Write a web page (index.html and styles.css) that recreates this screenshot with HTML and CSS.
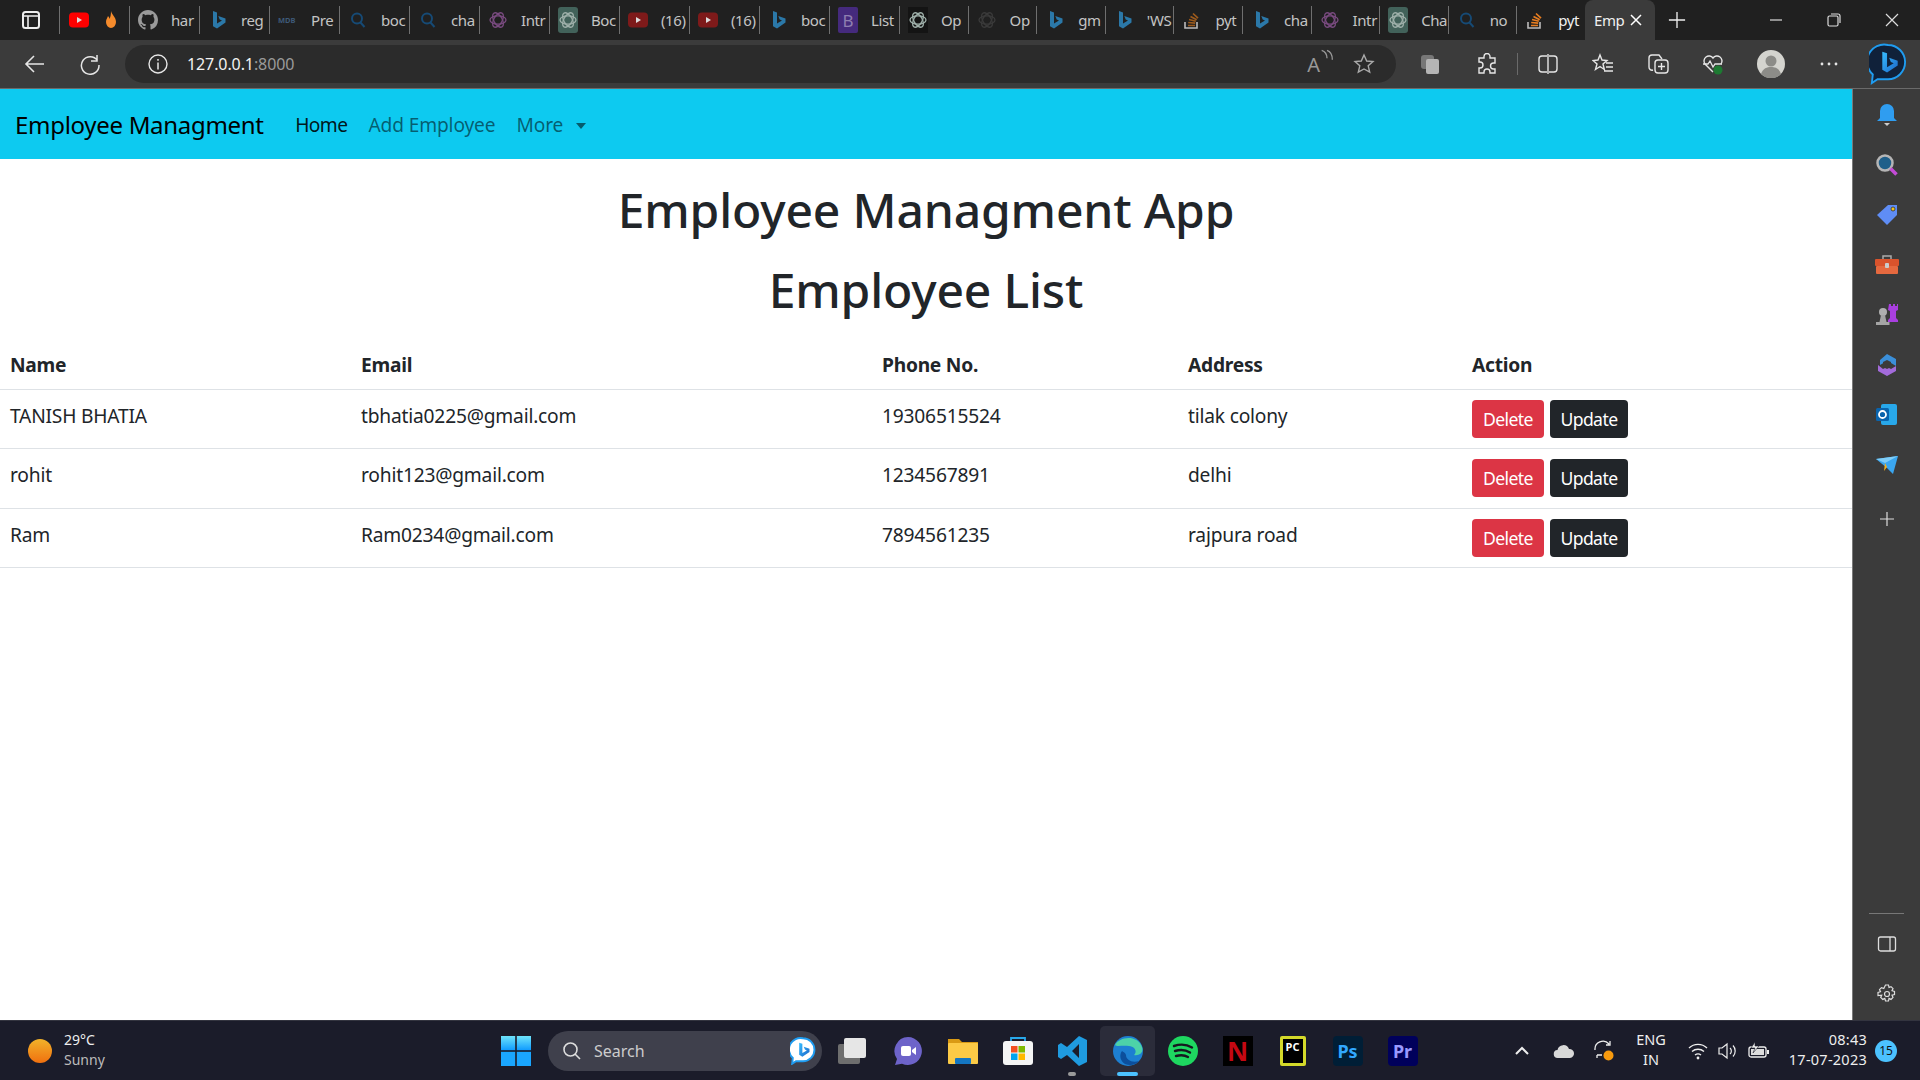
FILE: index.html
```html
<!DOCTYPE html>
<html lang="en">
<head>
  <meta charset="UTF-8">
  <title>Employee Managment App</title>
  <link rel="stylesheet" href="styles.css">
</head>
<body>
  <svg class="defs" width="0" height="0">
    <defs>
      <linearGradient id="bing-grad" x1="0" y1="0" x2="1" y2="1"><stop offset="0" stop-color="#37bdff"/><stop offset="1" stop-color="#1b66c9"/></linearGradient>
      <linearGradient id="sun-grad" x1="0" y1="0" x2="0" y2="1"><stop offset="0" stop-color="#f2b32a"/><stop offset="1" stop-color="#f0700f"/></linearGradient>
      <linearGradient id="win-grad" x1="0" y1="0" x2="0" y2="1"><stop offset="0" stop-color="#6fe4fb"/><stop offset="1" stop-color="#0f9bff"/></linearGradient>
      <symbol id="bing" viewBox="0 0 20 20"><path d="M5 1l4 1.400v11l5-2.900-2.300-1.100-1.400-3.500 7.200 2.500v4L9 18.500l-4-2.300z" fill="#2b78a8"/></symbol>
      <symbol id="gpt" viewBox="0 0 20 20"><g fill="none" stroke="currentColor" stroke-width="1.300"><ellipse cx="10" cy="10" rx="8" ry="4.200"/><ellipse cx="10" cy="10" rx="8" ry="4.200" transform="rotate(60 10 10)"/><ellipse cx="10" cy="10" rx="8" ry="4.200" transform="rotate(120 10 10)"/></g></symbol>
      <symbol id="find" viewBox="0 0 20 20"><circle cx="9" cy="8.500" r="5" fill="none" stroke="#164a75" stroke-width="2"/><path d="M12.500 12.500l4 4.500" stroke="#164a75" stroke-width="2"/></symbol>
      <symbol id="yt" viewBox="0 0 20 20"><rect y="2.500" width="20" height="15" rx="4" fill="currentColor"/><path d="M8 7l5 3-5 3z" fill="#ddd"/></symbol>
      <symbol id="so" viewBox="0 0 20 20"><path d="M3 12v6h12v-6" fill="none" stroke="#bcbbbb" stroke-width="1.600"/><path d="M6 15.500h7M6.200 12.500l7 .7M7 9.500l6.800 1.800M8.500 6.500l6.200 3.300M11 3.500l5 4.700" stroke="currentColor" stroke-width="1.700"/></symbol>
      <symbol id="github" viewBox="0 0 16 16"><path fill="#9a9a9a" d="M8 0C3.580 0 0 3.580 0 8c0 3.540 2.290 6.530 5.470 7.590.4.070.55-.17.55-.38 0-.19-.01-.82-.01-1.490-2.010.37-2.530-.49-2.690-.94-.09-.23-.48-.94-.82-1.130-.28-.15-.68-.52-.01-.53.63-.01 1.080.58 1.230.82.72 1.210 1.870.87 2.330.66.07-.52.28-.87.51-1.070-1.780-.2-3.640-.89-3.640-3.950 0-.87.31-1.590.82-2.150-.08-.2-.36-1.020.08-2.120 0 0 .67-.21 2.200.82.64-.18 1.320-.27 2-.27.68 0 1.360.09 2 .27 1.530-1.040 2.200-.82 2.200-.82.44 1.100.16 1.920.08 2.120.51.56.82 1.270.82 2.150 0 3.070-1.870 3.750-3.650 3.950.29.25.54.73.54 1.480 0 1.070-.01 1.930-.01 2.200 0 .21.15.46.55.38A8.013 8.013 0 0016 8c0-4.420-3.580-8-8-8z"/></symbol>
      <symbol id="bingchat" viewBox="0 0 40 44"><path d="M20 2a18 18 0 0 1 18 18c0 10-8 18-18 18H9l-6 4 1-9A18 18 0 0 1 20 2z" fill="#10213a" stroke="#1f9cf0" stroke-width="2"/><path d="M14 9l5 1.800v14.500l7-4-3-1.500-1.800-4.500 9 3.200v5L19 31l-5-3z" fill="url(#bing-grad)"/></symbol>
    </defs>
  </svg>

  <div class="tabstrip">
    <div class="tab-actions">
      <svg class="ico-20" viewBox="0 0 20 20"><rect x="2" y="2" width="16" height="16" rx="2.500" fill="none" stroke="#eee" stroke-width="2"/><path d="M2 6h16M7 6v12" stroke="#eee" stroke-width="1.600"/></svg>
    </div>
    <div class="tab tab-pinned">
      <svg class="fav yt-red" viewBox="0 0 20 20"><use href="#yt"/></svg>
      <svg class="fav" viewBox="0 0 20 20"><path d="M10 1c1 4 5 6 5 11a5 6 0 0 1-10 0c0-3 1.500-4 2-6 1 1 1.500 2 1.500 3 1-2 1.500-5 1.500-8z" fill="#f58b2c"/></svg>
    </div>
    <div class="tab"><svg class="fav" viewBox="0 0 16 16"><use href="#github"/></svg><span class="tab-title">har</span></div>
    <div class="tab"><svg class="fav"><use href="#bing"/></svg><span class="tab-title">reg</span></div>
    <div class="tab"><svg class="fav" viewBox="0 0 20 20"><text class="mdb" x="0" y="13">MDB</text></svg><span class="tab-title">Pre</span></div>
    <div class="tab"><svg class="fav"><use href="#find"/></svg><span class="tab-title">boc</span></div>
    <div class="tab"><svg class="fav"><use href="#find"/></svg><span class="tab-title">cha</span></div>
    <div class="tab"><svg class="fav gpt-purple"><use href="#gpt"/></svg><span class="tab-title">Intr</span></div>
    <div class="tab"><span class="fav-box box-green"><svg class="fav gpt-grey"><use href="#gpt"/></svg></span><span class="tab-title">Boc</span></div>
    <div class="tab"><svg class="fav yt-dark"><use href="#yt"/></svg><span class="tab-title">(16)</span></div>
    <div class="tab"><svg class="fav yt-dark"><use href="#yt"/></svg><span class="tab-title">(16)</span></div>
    <div class="tab"><svg class="fav"><use href="#bing"/></svg><span class="tab-title">boc</span></div>
    <div class="tab"><span class="fav-box box-purple">B</span><span class="tab-title">List</span></div>
    <div class="tab"><span class="fav-box box-black"><svg class="fav gpt-grey"><use href="#gpt"/></svg></span><span class="tab-title">Op</span></div>
    <div class="tab"><svg class="fav gpt-dark"><use href="#gpt"/></svg><span class="tab-title">Op</span></div>
    <div class="tab"><svg class="fav"><use href="#bing"/></svg><span class="tab-title">gm</span></div>
    <div class="tab"><svg class="fav"><use href="#bing"/></svg><span class="tab-title">'WS</span></div>
    <div class="tab"><svg class="fav so-dim"><use href="#so"/></svg><span class="tab-title">pyt</span></div>
    <div class="tab"><svg class="fav"><use href="#bing"/></svg><span class="tab-title">cha</span></div>
    <div class="tab"><svg class="fav gpt-purple"><use href="#gpt"/></svg><span class="tab-title">Intr</span></div>
    <div class="tab"><span class="fav-box box-green"><svg class="fav gpt-grey"><use href="#gpt"/></svg></span><span class="tab-title">Cha</span></div>
    <div class="tab"><svg class="fav"><use href="#find"/></svg><span class="tab-title">no</span></div>
    <div class="tab"><svg class="fav so-bright"><use href="#so"/></svg><span class="tab-title tab-title-bright">pyt</span></div>
    <div class="tab-active"><span class="tab-title tab-title-bright">Emp</span>
      <svg class="ico-14" viewBox="0 0 14 14"><path d="M2 2l10 10M12 2L2 12" stroke="#fff" stroke-width="1.500"/></svg>
    </div>
    <svg class="new-tab" viewBox="0 0 20 20"><path d="M10 1v18M1 10h18" stroke="#eee" stroke-width="1.500"/></svg>
    <div class="win-controls">
      <svg class="ico-14" viewBox="0 0 14 14"><path d="M1 7h12" stroke="#ddd" stroke-width="1.200"/></svg>
      <svg class="ico-14" viewBox="0 0 14 14"><rect x="1" y="3" width="10" height="10" rx="1.500" fill="none" stroke="#ddd" stroke-width="1.200"/><path d="M4 1h7a2 2 0 0 1 2 2v7" fill="none" stroke="#ddd" stroke-width="1.200"/></svg>
      <svg class="ico-14" viewBox="0 0 14 14"><path d="M1 1l12 12M13 1L1 13" stroke="#ddd" stroke-width="1.200"/></svg>
    </div>
  </div>

  <div class="toolbar">
    <svg class="tool tool-back" viewBox="0 0 22 22"><path d="M20 11H3M10 3l-8 8 8 8" fill="none" stroke="#e6e6e6" stroke-width="1.600"/></svg>
    <svg class="tool tool-reload" viewBox="0 0 22 22"><path d="M18 2v6h-6M18.500 7.500A8.800 8.800 0 1 0 20 12" fill="none" stroke="#e6e6e6" stroke-width="1.500"/></svg>
    <div class="address">
      <svg class="tool" viewBox="0 0 22 22"><circle cx="11" cy="11" r="9" fill="none" stroke="#e6e6e6" stroke-width="1.400"/><path d="M11 9.500v7M11 6v1.800" stroke="#e6e6e6" stroke-width="1.500"/></svg>
      <span class="url">127.0.0.1<span class="url-port">:8000</span></span>
      <span class="read-aloud">A<svg class="ico-10" viewBox="0 0 10 12"><path d="M1 1c3 1 4 3 4 6M5 1c3 1 4 4 4 7" fill="none" stroke="#999" stroke-width="1"/></svg></span>
      <svg class="tool tool-star" viewBox="0 0 22 22"><path d="M11 2l2.700 6 6.300.6-4.800 4.200 1.500 6.400L11 16l-5.700 3.200 1.500-6.400L2 8.600 8.300 8z" fill="none" stroke="#aaa" stroke-width="1.400"/></svg>
    </div>
    <div class="tool-group">
      <svg class="tool tool-tabs" viewBox="0 0 22 22"><rect x="2" y="2" width="13" height="14" rx="3" fill="#777"/><rect x="7" y="6" width="13" height="15" rx="2" fill="#b5b5b5"/></svg>
      <svg class="tool" viewBox="0 0 22 22"><path d="M8 3.500a3 3 0 0 1 6 0V5h5v5h-1.500a3 3 0 0 0 0 6H19v4h-5v-1a3 3 0 0 0-6 0v1H3v-5h1a3 3 0 0 0 0-6H3V5h5z" fill="none" stroke="#e6e6e6" stroke-width="1.400"/></svg>
      <span class="tool-divider"></span>
      <svg class="tool" viewBox="0 0 22 22"><path d="M10 3H5a3 3 0 0 0-3 3v10a3 3 0 0 0 3 3h5M12 3h5a3 3 0 0 1 3 3v10a3 3 0 0 1-3 3h-5M11 1v20" fill="none" stroke="#e6e6e6" stroke-width="1.400"/></svg>
      <svg class="tool" viewBox="0 0 22 22"><path d="M8 2l2 5 5 .5-4 3.500 1.300 5.500L8 13.500 3.500 16.500 5 11 1 7.500 6 7zM14 10h7M14 14h7M12 18h9" fill="none" stroke="#e6e6e6" stroke-width="1.400"/></svg>
      <svg class="tool" viewBox="0 0 22 22"><path d="M6 17a3 3 0 0 1-4-3V5a3 3 0 0 1 3-3h7l3 4" fill="none" stroke="#e6e6e6" stroke-width="1.400"/><rect x="8" y="7" width="13" height="13" rx="3" fill="none" stroke="#e6e6e6" stroke-width="1.400"/><path d="M14.500 10v7M11 13.500h7" stroke="#e6e6e6" stroke-width="1.400"/></svg>
      <svg class="tool" viewBox="0 0 22 22"><path d="M11 19L3 11a5 5 0 0 1 8-6 5 5 0 0 1 8 6" fill="none" stroke="#e6e6e6" stroke-width="1.400"/><path d="M1 11h5l2-3 3 6 2-3h7" fill="none" stroke="#e6e6e6" stroke-width="1.300"/><circle cx="16" cy="17" r="4.500" fill="#1d7a32"/></svg>
      <svg class="tool tool-avatar" viewBox="0 0 28 28"><circle cx="14" cy="14" r="14" fill="#d4d4cf"/><circle cx="14" cy="11" r="5.500" fill="#8c8c88"/><path d="M4 24c2-6 6-7 10-7s8 1 10 7a14 14 0 0 1-20 0z" fill="#8c8c88"/></svg>
      <svg class="tool" viewBox="0 0 22 22"><circle cx="4" cy="11" r="1.400" fill="#e6e6e6"/><circle cx="11" cy="11" r="1.400" fill="#e6e6e6"/><circle cx="18" cy="11" r="1.400" fill="#e6e6e6"/></svg>
      <svg class="tool-bing" viewBox="0 0 40 44"><use href="#bingchat"/></svg>
    </div>
  </div>

  <div class="window-body">
    <div class="page">
      <nav class="navbar">
        <a class="navbar-brand">Employee Managment</a>
        <a class="nav-link nav-link-active">Home</a>
        <a class="nav-link">Add Employee</a>
        <a class="nav-link">More <span class="caret"></span></a>
      </nav>
      <h1 class="page-title page-title-main">Employee Managment App</h1>
      <h1 class="page-title page-title-sub">Employee List</h1>
      <table class="employee-table">
        <thead>
          <tr>
            <th class="col-name">Name</th>
            <th class="col-email">Email</th>
            <th class="col-phone">Phone No.</th>
            <th class="col-address">Address</th>
            <th>Action</th>
          </tr>
        </thead>
        <tbody>
          <tr>
            <td>TANISH BHATIA</td>
            <td>tbhatia0225@gmail.com</td>
            <td>19306515524</td>
            <td>tilak colony</td>
            <td class="cell-actions"><div class="btn-row"><button class="btn btn-danger">Delete</button><button class="btn btn-dark">Update</button></div></td>
          </tr>
          <tr>
            <td>rohit</td>
            <td>rohit123@gmail.com</td>
            <td>1234567891</td>
            <td>delhi</td>
            <td class="cell-actions"><div class="btn-row"><button class="btn btn-danger">Delete</button><button class="btn btn-dark">Update</button></div></td>
          </tr>
          <tr>
            <td>Ram</td>
            <td>Ram0234@gmail.com</td>
            <td>7894561235</td>
            <td>rajpura road</td>
            <td class="cell-actions"><div class="btn-row"><button class="btn btn-danger">Delete</button><button class="btn btn-dark">Update</button></div></td>
          </tr>
        </tbody>
      </table>
    </div>

    <aside class="sidebar">
      <div class="side-icons">
        <svg class="side-ico" viewBox="0 0 24 24"><path d="M12 1a7 7 0 0 1 7 7v7l3 3H2l3-3V8a7 7 0 0 1 7-7z" fill="#2f9df0"/><path d="M9 20h6l-3 3z" fill="#ccc"/></svg>
        <svg class="side-ico" viewBox="0 0 24 24"><circle cx="10" cy="10" r="7.500" fill="#1f5f8a" stroke="#b5b5b5" stroke-width="2.500"/><path d="M15.500 15.500l6 6" stroke="#c44bd6" stroke-width="3.500"/></svg>
        <svg class="side-ico" viewBox="0 0 24 24"><path d="M13 2h9v10L12 22 2 12z" fill="#5f8df5"/><circle cx="18" cy="6" r="2" fill="#f5c518" stroke="#333" stroke-width=".8"/></svg>
        <svg class="side-ico" viewBox="0 0 24 24"><path d="M8 7V3h8v4" fill="none" stroke="#aaa" stroke-width="1.500"/><rect y="6" width="24" height="7" rx="1" fill="#d9532c"/><rect x="1" y="13" width="22" height="8" rx="1" fill="#e5693f"/><rect x="10" y="10" width="4" height="5" rx="1" fill="#ccc"/></svg>
        <svg class="side-ico" viewBox="0 0 24 24"><circle cx="8" cy="9" r="4" fill="#b0b0b0"/><path d="M6 12h4l1.500 7h3v3H1v-3h3.500z" fill="#a5a5a5"/><path d="M14 1h2v2h2V1h2v2h2V1h1v6l-2 1v7l2 2v2h-10v-2l2-2V8l-2-1z" fill="#a93fe0"/></svg>
        <svg class="side-ico" viewBox="0 0 24 24"><path d="M12 1l9 5v7l-5-3-4-2-7 4V7z" fill="#3b8fd9"/><path d="M3 12l5 4 4-2 4 2 5-3v5l-9 5-9-5z" fill="#a36bdb"/><path d="M8 9l4-2 4 2v5l-4 2-4-2z" fill="#3b3b3b"/></svg>
        <svg class="side-ico" viewBox="0 0 24 24"><rect x="6" y="1" width="16" height="21" rx="2" fill="#28a8ea"/><rect x="1" y="5" width="13" height="13" rx="1.500" fill="#0a64ad"/><circle cx="7.500" cy="11.500" r="3.500" fill="none" stroke="#fff" stroke-width="1.800"/></svg>
        <svg class="side-ico" viewBox="0 0 24 24"><path d="M1 6l22-3-5 18-6-6z" fill="#3aa6f0"/><path d="M1 6l9 4 13-7z" fill="#7fcdf7"/><path d="M10 10l-1 8 3-4z" fill="#f2b01e"/></svg>
        <svg class="side-plus" viewBox="0 0 16 16"><path d="M8 1v14M1 8h14" stroke="#ddd" stroke-width="1.200"/></svg>
      </div>
      <div class="side-bottom">
        <span class="side-rule"></span>
        <svg class="side-plain" viewBox="0 0 20 20"><rect x="1.500" y="3" width="17" height="14" rx="2" fill="none" stroke="#ddd" stroke-width="1.300"/><path d="M13 3v14" stroke="#ddd" stroke-width="1.300"/></svg>
        <svg class="side-plain" viewBox="0 0 20 20"><path d="M8.500 1h3l.5 2.500 2-.9 2 2-1 2.100 2.500.8v3l-2.500.7 1 2.200-2 2-2-1-.5 2.600h-3l-.7-2.600-2 1-2.100-2 1-2.200L1 11.500v-3l2.500-.8-1-2.100 2-2 2.300.9z" fill="none" stroke="#ddd" stroke-width="1.200"/><circle cx="10" cy="10" r="2.500" fill="none" stroke="#ddd" stroke-width="1.200"/></svg>
      </div>
    </aside>
  </div>

  <footer class="taskbar">
    <div class="weather">
      <svg class="sun" viewBox="0 0 24 24"><circle cx="12" cy="12" r="12" fill="url(#sun-grad)"/></svg>
      <div class="weather-text"><span>29°C</span><span class="weather-state">Sunny</span></div>
    </div>
    <svg class="win-logo" viewBox="0 0 30 30"><rect width="14.200" height="14.200" fill="url(#win-grad)"/><rect x="15.800" width="14.200" height="14.200" fill="url(#win-grad)"/><rect y="15.800" width="14.200" height="14.200" fill="#1aa6ff"/><rect x="15.800" y="15.800" width="14.200" height="14.200" fill="#1aa6ff"/></svg>
    <div class="search-pill">
      <svg class="ico-20" viewBox="0 0 20 20"><circle cx="8.500" cy="8.500" r="6.500" fill="none" stroke="#ddd" stroke-width="1.600"/><path d="M13 13l5 5" stroke="#ddd" stroke-width="1.600"/></svg>
      <span class="search-label">Search</span>
      <svg class="search-bing" viewBox="0 0 40 44"><path d="M20 2a18 18 0 0 1 18 18c0 10-8 18-18 18H9l-6 4 1-9A18 18 0 0 1 20 2z" fill="#fff" stroke="#1f9cf0" stroke-width="3"/><path d="M14 9l5 1.800v14.500l7-4-3-1.500-1.800-4.500 9 3.200v5L19 31l-5-3z" fill="url(#bing-grad)"/></svg>
    </div>
    <div class="task-icons">
      <span class="task-slot"><svg class="task-ico" viewBox="0 0 30 30"><rect y="8" width="22" height="20" rx="2" fill="#6e6e6e"/><rect x="6" y="2" width="22" height="20" rx="2" fill="#e6e6e6"/></svg></span>
      <span class="task-slot"><svg class="task-ico" viewBox="0 0 30 30"><path d="M15 1a14 14 0 1 1-6 26.700L2 29l2-6A14 14 0 0 1 15 1z" fill="#6d63c9"/><rect x="8" y="10" width="10" height="10" rx="2" fill="#fff"/><path d="M19 14l4-3v8l-4-3z" fill="#fff"/></svg></span>
      <span class="task-slot"><svg class="task-ico" viewBox="0 0 30 30"><path d="M0 3h11l3 3h16v3H0z" fill="#d99a14"/><rect y="7" width="30" height="21" rx="1" fill="#fcca46"/><rect x="7" y="22" width="16" height="6" rx="1" fill="#1476c2"/></svg></span>
      <span class="task-slot"><svg class="task-ico" viewBox="0 0 30 30"><path d="M8 6V2h14v4" fill="none" stroke="#28a8ea" stroke-width="1.800"/><rect y="5" width="30" height="24" rx="3" fill="#f5f5f5"/><rect x="8" y="10" width="6.500" height="6.500" fill="#f25022"/><rect x="15.500" y="10" width="6.500" height="6.500" fill="#7fba00"/><rect x="8" y="17.500" width="6.500" height="6.500" fill="#00a4ef"/><rect x="15.500" y="17.500" width="6.500" height="6.500" fill="#ffb900"/></svg></span>
      <span class="task-slot task-open"><svg class="task-ico" viewBox="0 0 30 30"><path d="M21 0l8 4v22l-8 4-12-11-6 4-3-2V9l3-2 6 4zM21 8l-7 7 7 7z" fill="#1f9be0"/></svg></span>
      <span class="task-slot task-active"><svg class="task-ico" viewBox="0 0 30 30"><circle cx="15" cy="15" r="15" fill="#1d7fd1"/><path d="M2 9C6 1 24-2 29 11c2 6-3 9-8 8 3-3 2-8-5-9C9 9 4 11 2 9z" fill="#4dd2a8"/><path d="M13 19c0 5 6 8 13 6-3 4-9 5-14 3-5-3-6-9-3-13 1 1 3 1 4 4z" fill="#0c4f9c"/></svg></span>
      <span class="task-slot"><svg class="task-ico" viewBox="0 0 30 30"><circle cx="15" cy="15" r="15" fill="#1ed760"/><path d="M6 10c6-2 13-1.500 18 1.500M7 15c5-1.500 11-1 15 1.500M8 20c4-1 9-.8 12 1" fill="none" stroke="#16181f" stroke-width="2.400" stroke-linecap="round"/></svg></span>
      <span class="task-slot"><span class="app-tile app-netflix">N</span></span>
      <span class="task-slot"><span class="app-tile app-pycharm">PC</span></span>
      <span class="task-slot"><span class="app-tile app-ps">Ps</span></span>
      <span class="task-slot"><span class="app-tile app-pr">Pr</span></span>
    </div>
    <div class="tray">
      <svg class="tray-ico tray-chevron" viewBox="0 0 18 18"><path d="M3 12l6-6 6 6" fill="none" stroke="#eee" stroke-width="2"/></svg>
      <svg class="tray-ico tray-cloud" viewBox="0 0 22 18"><path d="M5 16a4 4 0 0 1-.5-8A6 6 0 0 1 16 7a4.500 4.500 0 0 1 1 9z" fill="#d8d8d8"/></svg>
      <svg class="tray-ico tray-sync" viewBox="0 0 22 22"><path d="M2 10A8 8 0 0 1 16 4M17 1v4h-4M4 15h5M4 15v3" fill="none" stroke="#eee" stroke-width="1.300"/><circle cx="15.500" cy="15.500" r="5" fill="#f79a0e"/></svg>
      <div class="tray-lang"><span>ENG</span><span>IN</span></div>
      <svg class="tray-ico tray-wifi" viewBox="0 0 20 18"><path d="M1 6a13 13 0 0 1 18 0M4 9.500a9 9 0 0 1 12 0M7 13a5 5 0 0 1 6 0" fill="none" stroke="#eee" stroke-width="1.400"/><circle cx="10" cy="16" r="1.400" fill="#eee"/></svg>
      <svg class="tray-ico tray-sound" viewBox="0 0 20 18"><path d="M1 6v6h3l5 4V2L4 6z" fill="none" stroke="#eee" stroke-width="1.200"/><path d="M12 6a4 4 0 0 1 0 6M15 3.500a8 8 0 0 1 0 11" fill="none" stroke="#eee" stroke-width="1.200"/></svg>
      <svg class="tray-ico tray-battery" viewBox="0 0 22 18"><rect x="1" y="5" width="17" height="10" rx="2" fill="none" stroke="#eee" stroke-width="1.300"/><rect x="3" y="7" width="13" height="6" fill="#ddd"/><rect x="19" y="8" width="2" height="4" fill="#eee"/><path d="M7 0L3 6h4l-2 5 6-7H7z" fill="#eee" stroke="#1b1c2a" stroke-width=".6"/></svg>
      <div class="tray-clock"><span>08:43</span><span>17-07-2023</span></div>
      <span class="tray-badge">15</span>
    </div>
  </footer>
</body>
</html>
```
FILE: styles.css
```css
* {
  box-sizing: border-box;
}

html, body {
  margin: 0;
  padding: 0;
  width: 1920px;
  height: 1080px;
  overflow: hidden;
}

body {
  display: flex;
  flex-direction: column;
  font-family: "Noto Sans", "Open Sans", sans-serif;
  background-color: #fff;
  color: #212529;
}

.defs {
  position: absolute;
}

svg {
  display: block;
  flex: none;
}

.ico-20 { width: 20px; height: 20px; }
.ico-14 { width: 14px; height: 14px; }
.ico-10 { width: 14px; height: 16px; margin-top: -2px; }

/* tab strip */
.tabstrip {
  display: flex;
  align-items: center;
  height: 40px;
  background-color: #202020;
  flex: none;
}

.tab-actions {
  display: flex;
  justify-content: center;
  width: 59px;
  padding-left: 2px;
  flex: none;
}

.tab {
  display: flex;
  align-items: center;
  gap: 13px;
  width: 70px;
  height: 28px;
  padding-left: 8px;
  border-left: 1px solid #6f6f6f;
  flex: none;
}

/* tabs get a little tighter towards the active one */
.tab:nth-child(n+14) {
  width: 68.600px;
}

.tab-pinned {
  gap: 12px;
  padding-left: 9px;
}

.fav {
  width: 20px;
  height: 20px;
  color: #999;
}

.fav-box {
  display: flex;
  align-items: center;
  justify-content: center;
  width: 20px;
  height: 26px;
  flex: none;
  font-size: 17px;
  color: #8f7fb0;
}

.box-green { background-color: #42625a; border-radius: 3px; }
.box-black { background-color: #141414; }
.box-purple { background-color: #452a7d; border-radius: 2px; }

.yt-red { color: #f00; }
.yt-dark { color: #7e1a1a; }
.gpt-purple { color: #7a4b80; }
.gpt-grey { color: #9fb0aa; }
.gpt-dark { color: #3a3a3a; }
.so-dim { color: #9c5a1c; }
.so-bright { color: #e87d20; }

.mdb {
  font-size: 7.5px;
  font-weight: 700;
  fill: #3e5a78;
}

.tab-title {
  white-space: nowrap;
  font-size: 15px;
  letter-spacing: -0.4px;
  color: #c4c4c4;
  flex: none;
}

.tab-title-bright {
  color: #f0f0f0;
}

.tab-active {
  display: flex;
  align-items: center;
  justify-content: space-between;
  width: 70px;
  height: 40px;
  padding: 0 12px 0 9px;
  background-color: #3b3b3b;
  border-radius: 8px 8px 0 0;
  flex: none;
}

.new-tab {
  width: 18px;
  height: 18px;
  margin-left: 13px;
}

.win-controls {
  display: flex;
  gap: 44px;
  margin-left: 83px;
}

/* toolbar */
.toolbar {
  display: flex;
  align-items: center;
  height: 49px;
  padding-left: 24px;
  background-color: #3b3b3b;
  border-bottom: 1px solid #6a6a6a;
  flex: none;
}

.tool {
  width: 22px;
  height: 22px;
}

.tool-reload {
  margin-left: 33px;
}

.address {
  display: flex;
  align-items: center;
  width: 1271px;
  height: 38px;
  margin-left: 24px;
  padding-left: 22px;
  background-color: #2b2b2b;
  border-radius: 19px;
  flex: none;
}

.url {
  margin-left: 18px;
  font-size: 16px;
  letter-spacing: -0.1px;
  color: #f2f2f2;
}

.url-port {
  color: #9a9a9a;
}

.read-aloud {
  display: flex;
  margin-left: auto;
  font-size: 20px;
  color: #999;
}

.tool-star {
  margin-left: 19px;
  margin-right: 21px;
}

.tool-group {
  display: flex;
  align-items: center;
  margin-left: 23px;
  gap: 33px;
}

.tool-tabs {
  margin-right: 2px;
}

.tool-divider {
  width: 1px;
  height: 22px;
  margin: 0 -14px;
  background-color: #6a6a6a;
}

.tool-avatar {
  width: 28px;
  height: 28px;
}

.tool-bing {
  width: 38px;
  height: 42px;
  margin-left: -4px;
}

/* page */
.window-body {
  display: flex;
  height: 931px;
  flex: none;
}

.page {
  width: 1852px;
  background-color: #fff;
  flex: none;
}

.navbar {
  display: flex;
  align-items: center;
  height: 70px;
  padding-left: 15px;
  background-color: #0dcaf0;
}

.navbar-brand {
  margin-right: 21px;
  font-size: 24px;
  letter-spacing: -0.3px;
  color: #000;
}

.nav-link {
  padding: 0 10.500px;
  font-size: 19.200px;
  letter-spacing: -0.15px;
  color: rgba(0, 0, 0, 0.55);
}

.nav-link-active {
  letter-spacing: -0.6px;
  color: rgba(0, 0, 0, 0.9);
}

.caret {
  display: inline-block;
  margin-left: 8px;
  vertical-align: 3px;
  border-top: 6px solid rgba(0, 0, 0, 0.55);
  border-left: 5.500px solid transparent;
  border-right: 5.500px solid transparent;
}

.page-title {
  margin: 0;
  height: 65px;
  font-size: 48px;
  font-weight: 500;
  line-height: 65px;
  text-align: center;
  letter-spacing: -0.15px;
  color: #212529;
}

.page-title-main {
  margin-top: 18px;
  margin-bottom: 15px;
}

.page-title-sub {
  margin-bottom: 20px;
}

.employee-table {
  width: 100%;
  table-layout: fixed;
  border-collapse: collapse;
  font-size: 19.200px;
  letter-spacing: -0.2px;
}

.col-name { width: 351px; }
.col-email { width: 521px; }
.col-phone { width: 306px; }
.col-address { width: 284px; }

.employee-table th,
.employee-table td {
  padding: 11px 10px 10px;
  text-align: left;
  vertical-align: top;
  border-bottom: 1px solid #dee2e6;
  line-height: 29px;
}

.employee-table th {
  height: 47.500px;
  padding-top: 8px;
  padding-bottom: 0;
  font-weight: 700;
  letter-spacing: -0.25px;
}

.employee-table td {
  height: 59.300px;
}

.employee-table .cell-actions {
  padding-top: 10px;
  padding-bottom: 0;
}

.btn-row {
  display: flex;
  gap: 6px;
}

.btn {
  height: 38px;
  padding: 0 11px;
  border: none;
  border-radius: 4px;
  font-family: inherit;
  font-size: 17.600px;
  letter-spacing: -0.6px;
  color: #fff;
}

.btn-danger { background-color: #dc3545; }
.btn-dark { background-color: #212529; padding: 0 10.500px; }

/* edge sidebar */
.sidebar {
  display: flex;
  flex-direction: column;
  justify-content: space-between;
  align-items: center;
  flex: 1;
  padding-top: 14px;
  padding-bottom: 16px;
  background-color: #3b3b3b;
  border-left: 1px solid #7a7a7a;
}

.side-icons {
  display: flex;
  flex-direction: column;
  align-items: center;
  gap: 26px;
}

.side-ico {
  width: 24px;
  height: 24px;
}

.side-plus {
  width: 16px;
  height: 16px;
  margin-top: 8px;
}

.side-bottom {
  display: flex;
  flex-direction: column;
  align-items: center;
  gap: 20px;
}

.side-rule {
  width: 35px;
  height: 1px;
  background-color: #777;
}

.side-plain {
  width: 20px;
  height: 20px;
}

.side-bottom .side-plain + .side-plain {
  margin-top: 10px;
}

/* taskbar */
.taskbar {
  display: flex;
  align-items: center;
  height: 60px;
  background-color: #1b1c2a;
  border-top: 1px solid #33343f;
  color: #eee;
  flex: 1;
}

.weather {
  display: flex;
  align-items: center;
  width: 501px;
  padding-left: 28px;
  flex: none;
}

.sun {
  width: 24px;
  height: 24px;
}

.weather-text {
  display: flex;
  flex-direction: column;
  margin-left: 12px;
  padding-bottom: 2px;
  font-size: 14px;
  line-height: 20px;
}

.weather-state {
  color: #bbb;
}

.win-logo {
  width: 30px;
  height: 30px;
}

.search-pill {
  display: flex;
  align-items: center;
  width: 274px;
  height: 40px;
  margin-left: 17px;
  padding-left: 14px;
  background-color: #3f404c;
  border-radius: 20px;
}

.search-label {
  margin-left: 12px;
  font-size: 16px;
  color: #ccc;
}

.search-bing {
  width: 26px;
  height: 28px;
  margin-left: auto;
  margin-right: 6px;
}

.task-icons {
  display: flex;
  margin-left: 3px;
}

.task-slot {
  position: relative;
  display: flex;
  align-items: center;
  justify-content: center;
  width: 55px;
  height: 50px;
}

.task-ico {
  width: 30px;
  height: 30px;
}

.task-active {
  background-color: #2b2c3a;
  border-radius: 5px;
}

.task-active::after,
.task-open::after {
  content: "";
  position: absolute;
  bottom: 0;
  left: 17px;
  width: 21px;
  height: 4px;
  border-radius: 2px;
  background-color: #4cc2ff;
}

.task-open::after {
  left: 23px;
  width: 8px;
  background-color: #9a9a9a;
}

.app-tile {
  display: flex;
  align-items: center;
  justify-content: center;
  width: 30px;
  height: 30px;
  border-radius: 4px;
  font-size: 18px;
  font-weight: 700;
}

.app-netflix {
  border-radius: 0;
  background-color: #000;
  color: #c40812;
  font-size: 26px;
}

.app-pycharm {
  width: 26px;
  height: 30px;
  padding-bottom: 8px;
  border: 3px solid #d4d92a;
  border-radius: 2px;
  background-color: #000;
  color: #fff;
  font-size: 11px;
}

.app-ps {
  background-color: #001e36;
  color: #31a8ff;
}

.app-pr {
  background-color: #00005b;
  color: #9999ff;
}

.tray {
  display: flex;
  align-items: center;
  margin-left: auto;
  padding-right: 23px;
}

.tray-ico {
  width: 20px;
  height: 20px;
}

.tray-chevron { width: 18px; height: 18px; }
.tray-cloud { margin-left: 22px; width: 22px; }
.tray-sync { margin-left: 18px; width: 22px; height: 22px; }
.tray-wifi { margin-left: 17px; }
.tray-sound { margin-left: 10px; }
.tray-battery { margin-left: 10px; width: 22px; }

.tray-lang {
  display: flex;
  flex-direction: column;
  align-items: center;
  width: 40px;
  margin-left: 16px;
  padding-bottom: 3px;
  font-size: 14.500px;
  line-height: 20px;
}

.tray-clock {
  display: flex;
  flex-direction: column;
  align-items: flex-end;
  width: 90px;
  margin-left: 7px;
  padding-bottom: 3px;
  font-size: 14.500px;
  line-height: 20px;
  letter-spacing: 0.25px;
}

.tray-badge {
  display: flex;
  align-items: center;
  justify-content: center;
  width: 22px;
  height: 22px;
  margin-left: 8px;
  border-radius: 50%;
  background-color: #4cc2ff;
  color: #111;
  font-size: 12px;
}
```
